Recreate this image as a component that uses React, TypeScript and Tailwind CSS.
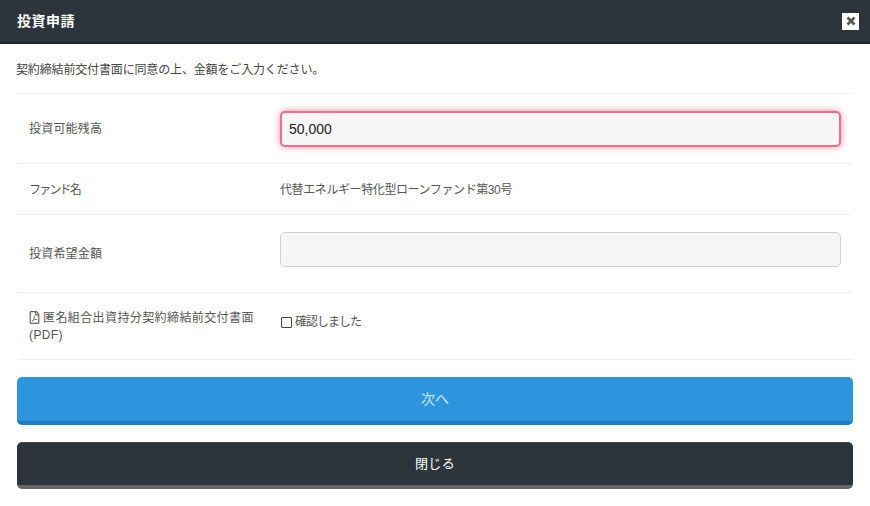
import React from 'react';
import { FaRegFilePdf } from 'react-icons/fa';

const font = { fontFamily: '"Liberation Sans", "Noto Sans CJK JP", sans-serif' };

const Row = ({ className, children }: { className: string; children: React.ReactNode }) => (
  <div className={`flex items-center border-b border-[#f0f0f0] px-[12px] ${className}`}>{children}</div>
);

export default function App() {
  return (
    <div style={font} className="w-[870px] h-[506px] bg-white overflow-hidden text-[12px] text-[#555]">
      <header className="h-[44px] bg-[#2c353b] border-b-2 border-[#20282d] flex items-center justify-between pl-[17px] pr-[11px]">
        <h1 className="text-[14px] font-bold text-white tracking-[0.5px]">投資申請</h1>
        <button className="w-[17px] h-[17px] bg-white flex items-center justify-center text-[#555]">
          <svg viewBox="0 0 10 10" className="w-[10px] h-[10px]" fill="none" stroke="#555" strokeWidth="2.600">
            <path d="M1.500 1.500l7 7M8.500 1.500l-7 7" />
          </svg>
        </button>
      </header>

      <div className="px-[17px]">
        <p className="h-[50px] border-b border-[#f0f0f0] flex items-center text-[#444] pt-[3px] -ml-px tracking-[-0.15px]">
          契約締結前交付書面に同意の上、金額をご入力ください。
        </p>

        <Row className="h-[70px]">
          <div className="w-[251px] pt-[1px] tracking-[0.2px]">投資可能残高</div>
          <input
            readOnly
            value="50,000"
            className="flex-1 h-[36px] rounded-[5px] border-2 border-[#fb6b85] bg-[#f6f6f6] px-[7px] text-[14px] text-[#222] shadow-[0_0_6px_rgba(255,60,90,0.6)] outline-none"
          />
        </Row>

        <Row className="h-[51px]">
          <div className="w-[251px] pt-[1px] tracking-[-1.8px]">ファンド名</div>
          <div className="pt-[1px] tracking-[-0.4px]">代替エネルギー特化型ローンファンド第30号</div>
        </Row>

        <Row className="h-[78px]">
          <div className="w-[251px] tracking-[0.2px]">投資希望金額</div>
          <input
            readOnly
            className="flex-1 h-[35px] mb-[9px] rounded-[5px] border border-[#d0d0d0] bg-[#f6f6f6] px-[8px] outline-none"
          />
        </Row>

        <Row className="h-[67px]">
          <div className="w-[251px] leading-[17px] pt-[2px] tracking-[0.4px]">
            <FaRegFilePdf className="inline-block w-[11px] h-[13px] mr-[3px] align-[-2px] text-[#666]" />
            匿名組合出資持分契約締結前交付書面
            <br />
            (PDF)
          </div>
          <label className="flex items-center gap-[3px] ml-px mb-[8px] tracking-[-1px]">
            <span className="w-[11px] h-[11px] border-[1.5px] border-[#444] rounded-[1px] bg-white" />
            確認しました
          </label>
        </Row>

        <div className="flex flex-col pt-[17px]">
          <button className="h-[48px] rounded-[5px] bg-[#2d95de] border-b-[4px] border-[#1a7fc8] text-[14px] text-white/80">次へ</button>
          <button className="h-[47px] mt-[17px] rounded-[5px] bg-[#2c353b] border-t border-t-[#3f4a50] border-b-[4px] border-b-[#666] text-[13px] text-white tracking-[0.3px]">閉じる</button>
        </div>
      </div>
    </div>
  );
}
